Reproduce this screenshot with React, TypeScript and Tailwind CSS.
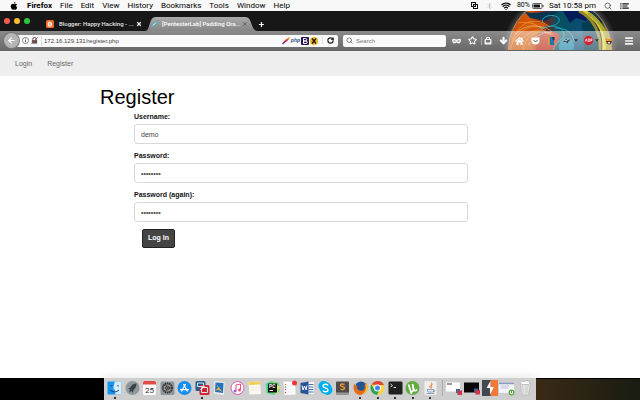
import React, { useState } from 'react';
import { Search, Wifi, Bluetooth, Star, ArrowLeft, ArrowDown, RotateCw, Menu, Plus, X } from 'lucide-react';

const menus = ['File', 'Edit', 'View', 'History', 'Bookmarks', 'Tools', 'Window', 'Help'];

const MenuBar: React.FC = () => (
  <header className="flex h-[11px] items-center justify-between bg-[#f8f8f8] pl-[10px] pr-[11px] font-[family-name:Roboto,sans-serif] text-[8px] leading-[11px] text-black">
    <nav className="flex items-center gap-2 whitespace-nowrap">
      <svg viewBox="0 0 16 18" className="mr-[1px] h-[8px] w-[8px]">
        <path d="M11 0c0 2-1.300 4-3.300 4C7.500 2 9 .3 11 0ZM8 5c1 0 2-1 3.600-1 1.300 0 2.400.6 3.200 1.700-2.800 1.700-2.300 5.600.5 6.700C14.500 15 13 17.500 11.500 17.500c-1.200 0-1.700-.7-3.300-.7s-2.200.7-3.300.7C3 17.500.7 13.500.7 9.800.7 6.200 3 4 5.200 4 6.400 4 7.300 5 8 5Z" />
      </svg>
      <button className="font-bold">Firefox</button>
      {menus.map((m) => (
        <button key={m}>{m}</button>
      ))}
    </nav>
    <div className="flex items-center whitespace-nowrap">
      <svg viewBox="0 0 14 14" className="mr-2 h-[7px] w-[7px]" fill="none" stroke="#111" strokeWidth="2">
        <rect x="1" y="1" width="8" height="8" />
        <rect x="5" y="5" width="8" height="8" />
      </svg>
      <Bluetooth className="mr-2 h-2 w-[7px] text-[#b4b4b4]" />
      <Wifi className="mr-[6px] h-[10px] w-[10px]" strokeWidth={3} />
      <span className="mr-[2px] text-[7px] leading-[11px]">80%</span>
      <svg viewBox="0 0 24 12" className="mr-[5px] h-[6px] w-[12px]">
        <rect x="1" y="1" width="19" height="10" rx="2" fill="none" stroke="#333" strokeWidth="1.500" />
        <rect x="3" y="3" width="13" height="6" fill="#111" />
        <path d="M22 4v4" stroke="#333" strokeWidth="2" />
      </svg>
      <span className="mr-2">Sat 10:58 pm</span>
      <Search className="mr-2 h-2 w-2 text-[#333]" />
      <svg viewBox="0 0 20 14" className="h-[6px] w-[9px]" stroke="#111" strokeWidth="2.500">
        <path d="M0 2h3M0 7h3M0 12h3M5 2h15M5 7h12M5 12h15" />
      </svg>
    </div>
  </header>
);

/* Glowing marble of the browser theme */
const ThemeArt: React.FC = () => (
  <svg viewBox="0 0 120 40" className="absolute right-[20px] top-0 h-[40px] w-[120px]">
    <defs>
      <radialGradient id="halo" cx="60" cy="39" r="58" gradientUnits="userSpaceOnUse">
        <stop offset=".86" stopColor="#fff" stopOpacity=".3" />
        <stop offset="1" stopColor="#888" stopOpacity="0" />
      </radialGradient>
      <linearGradient id="marble" x1="0" x2="1">
        <stop offset="0" stopColor="#b84b0c" />
        <stop offset=".25" stopColor="#d85808" />
        <stop offset=".38" stopColor="#702420" />
        <stop offset=".48" stopColor="#07505f" />
        <stop offset=".7" stopColor="#0a4d75" />
        <stop offset=".84" stopColor="#0b2b38" />
        <stop offset=".9" stopColor="#b59a18" />
        <stop offset="1" stopColor="#d8bd25" />
      </linearGradient>
      <clipPath id="ball"><circle cx="60" cy="39" r="51" /></clipPath>
    </defs>
    <circle cx="60" cy="39" r="58" fill="url(#halo)" />
    <g clipPath="url(#ball)" fill="none">
      <rect width="120" height="40" fill="url(#marble)" />
      <path d="M24 0c12 5 22-2 34 1L46 10 30 7Z" fill="#0c3550" />
      <path d="M63 0h28l-5 10-10-3-6 5Z" fill="#071a58" />
      <path d="M82 12l12-4 4 32H84Z" fill="#063c50" />
      <path d="M10 34C17 8 36 8 48 15c-8 2-13 8-16 25H10Z" fill="#cf5a0c" />
      <path d="M36 40c0-12 7-20 18-19 9 1 5 9-1 19Z" fill="#b8240c" />
      <path d="M60 40c-4-8 4-15 9-13s6 8 4 13Z" fill="#1884a8" />
      <path d="M83 0c17 8 23 22 21 40" stroke="#e8cf35" strokeWidth="4" />
      <path d="M79 0c16 8 22 24 21 40" stroke="#96862c" strokeWidth="3" />
      <path d="M88 2c15 10 21 24 19 38" stroke="#a6a52c" strokeWidth="3" />
      <path d="M43 12c-4-8 14-10 16-4 2 7-13 8-20 9M40 20c10-9 23-4 24 3s-9 5-11 17M55 17c12 0 18 5 19 14" stroke="#22a4b8" strokeWidth="1" />
      <path d="M12 31C19 8 38 6 50 16M10 38c8-24 30-28 42-17M19 33c10-17 24-16 34-9M23 40c3-20 19-22 28-16M18 12c12-2 20 1 28 10" stroke="#f98c2e" strokeWidth=".8" />
      <path d="M15 24c9-10 20-12 31-5M28 34c8-9 12-12 24-13" stroke="#ffd098" strokeWidth=".5" />
    </g>
    <circle cx="60" cy="39" r="51.500" fill="none" stroke="#f4b77c" strokeWidth=".6" />
  </svg>
);

const TabStrip: React.FC = () => (
  <div className="relative flex h-5 items-end pl-1 font-[family-name:Roboto,sans-serif] text-[6px] font-bold leading-[14px] text-white">
    <div className="flex h-full w-[40px] items-center gap-1">
      <button aria-label="Close window" className="h-[6px] w-[6px] rounded-full bg-[#fb5a52]" />
      <button aria-label="Minimize window" className="h-[6px] w-[6px] rounded-full bg-[#fdbc2f]" />
      <button aria-label="Zoom window" className="h-[6px] w-[6px] rounded-full bg-[#29c73f]" />
    </div>
    <div className="flex h-[14px] w-[101px] items-center pl-[2px] pr-[3px] text-[#e4e4e4]">
      <svg viewBox="0 0 16 16" className="mr-[5px] h-2 w-2 shrink-0">
        <rect width="16" height="16" rx="3" fill="#f36b20" />
        <path d="M5 3.500h3.500a2.500 2.500 0 0 1 2.500 2.500c0 1 .2 1.200 1 1.500v2.500a3 3 0 0 1-3 3H6a2.500 2.500 0 0 1-2.500-2.500V5.500Z" fill="#fff" />
        <path d="M6 6.300h2.500M6 9.800h4" stroke="#f36b20" strokeWidth="1.500" strokeLinecap="round" />
      </svg>
      <span className="flex-1 whitespace-nowrap font-medium">Blogger: Happy Hacking - ...</span>
      <button aria-label="Close tab"><X className="h-[6px] w-[6px]" strokeWidth={5} /></button>
    </div>
    <div className="relative h-[14px] w-[113px]">
      <svg viewBox="0 0 114 14" preserveAspectRatio="none" className="absolute inset-0 h-full w-full">
        <defs>
          <linearGradient id="tab" x2="0" y2="1">
            <stop stopColor="#aaa" />
            <stop offset="1" stopColor="#858585" />
          </linearGradient>
        </defs>
        <path d="M0 14C6 14 3 0 11 0h90c8 0 5 14 13 14Z" fill="url(#tab)" />
      </svg>
      <div className="relative flex h-full items-center pl-[6px] pr-[10px]">
        <svg viewBox="0 0 16 16" className="mr-[3px] h-2 w-2 shrink-0">
          <path d="M1 14 5 5l4-1 6-3-3 7-5 4Z" fill="#58a5bd" />
          <path d="m3 11 8-6" stroke="#d1e9ef" strokeWidth="2" />
        </svg>
        <span className="flex-1 whitespace-nowrap font-medium">[PentesterLab] Padding Ora...</span>
        <button aria-label="Close tab"><X className="h-[6px] w-[6px] text-[#555]" strokeWidth={3} /></button>
      </div>
    </div>
    <button aria-label="New tab" className="flex h-[14px] items-center"><Plus className="h-[7px] w-[7px]" strokeWidth={4} /></button>
  </div>
);

const Toolbar: React.FC = () => (
  <div className="relative flex h-5 items-center border-b border-[#666] bg-gradient-to-b from-white/50 to-white/35 pl-1 pr-[6px] text-[6px]">
    <button aria-label="Back" className="z-10 flex h-[15px] w-[15px] items-center justify-center rounded-full bg-[#b5b5b5] ring-1 ring-[#777]">
      <ArrowLeft className="h-[9px] w-[9px] text-white" strokeWidth={3} />
    </button>
    <div className="-ml-[2px] mr-[5px] flex h-3 flex-1 items-center rounded-r-[2px] bg-[#fafafa] pl-[5px] pr-1">
      <svg viewBox="0 0 16 16" className="mr-[2px] h-[7px] w-[7px]" fill="none" stroke="#555" strokeWidth="1.500">
        <circle cx="8" cy="8" r="7" />
        <path d="M8 7v5M8 3.500v2" strokeWidth="2" />
      </svg>
      <svg viewBox="0 0 16 16" className="mr-[3px] h-[7px] w-[7px]">
        <path d="M4 7V5a4 4 0 0 1 8 0v2" fill="none" stroke="#444" strokeWidth="2" />
        <rect x="2" y="7" width="12" height="8" fill="#555" />
        <path d="M1 15 15 1" stroke="#d33" strokeWidth="2" />
      </svg>
      <input aria-label="Address" defaultValue="172.16.129.131/register.php" className="h-[10px] min-w-0 flex-1 border-l border-[#ddd] pl-[2px] text-[#444] outline-none" />
      <div className="flex items-center gap-[1px]">
        <svg viewBox="0 0 16 16" className="h-2 w-2">
          <path d="M1 14C4 7 9 3 15 1c-1 5-5 9-12 11Z" fill="#d63b3b" />
          <path d="m1 14 6-6" stroke="#70318b" strokeWidth="3" />
          <path d="m11 5 4-4" stroke="#f39a32" strokeWidth="3" />
        </svg>
        <span className="text-[5px] font-bold italic text-[#254f8a]">php</span>
        <svg viewBox="0 0 16 16" className="h-2 w-2">
          <rect width="16" height="16" rx="2" fill="#26164f" />
          <path d="M5 3h4a2.300 2.300 0 0 1 0 5H5Zm0 5h5a2.500 2.500 0 0 1 0 5H5Z" fill="none" stroke="#fff" strokeWidth="2" />
        </svg>
        <svg viewBox="0 0 16 16" className="h-2 w-2">
          <circle cx="8" cy="8" r="8" fill="#f3b61c" />
          <path d="m4 3 8 10M12 3 4 13" stroke="#111" strokeWidth="2.500" />
        </svg>
      </div>
      <button aria-label="Reload" className="ml-1 border-l border-[#ddd] pl-1"><RotateCw className="h-[7px] w-[7px] text-[#222]" strokeWidth={4} /></button>
    </div>
    <label className="flex h-3 w-[103px] items-center gap-[3px] rounded-[2px] bg-[#fafafa] pl-[3px]">
      <Search className="h-[7px] w-[7px] text-[#777]" strokeWidth={3} />
      <input aria-label="Search" placeholder="Search" className="h-[10px] w-[80px] outline-none placeholder:text-[#777]" />
    </label>
    <div className="flex h-full w-[188px] items-center text-[#f4f4f4]">
      <button aria-label="Private browsing" className="ml-[6px] mr-[7px]">
        <svg viewBox="0 0 18 10" className="h-[6px] w-[9px]">
          <path d="M0 2c3-3 6 0 9 0s6-3 9 0c0 5-2 8-5 8-2 0-3-2-4-2s-2 2-4 2C2 10 0 7 0 2Z" fill="currentColor" />
          <path d="M3 5h4m4 0h4" stroke="#777" strokeWidth="2" />
        </svg>
      </button>
      <button aria-label="Bookmark" className="mr-[4px]"><Star className="h-[9px] w-[9px]" strokeWidth={3} /></button>
      <button aria-label="Library" className="mr-[7px] border-l border-[#aaa] pl-[2px]">
        <svg viewBox="0 0 16 16" className="h-2 w-2">
          <path d="M5 4V1h6v3" fill="none" stroke="currentColor" strokeWidth="2" />
          <rect x="1" y="4" width="14" height="11" rx="2" fill="currentColor" />
          <path d="M4 7h8v2H4Zm0 4h8" stroke="#777" />
        </svg>
      </button>
      <button aria-label="Downloads" className="mr-[7px]"><ArrowDown className="h-[9px] w-[9px]" strokeWidth={6} /></button>
      <button aria-label="Home" className="mr-[7px]">
        <svg viewBox="0 0 18 16" className="h-2 w-[9px]">
          <path d="M9 0 0 8l1.500 1.500L9 3l7.500 6.500L18 8l-3-3V1h-3v2Z" fill="#fff" />
          <path d="m9 4 6 5.500V16h-4v-5H7v5H3V9.500Z" fill="#fff" />
        </svg>
      </button>
      <button aria-label="Pocket" className="mr-2">
        <svg viewBox="0 0 18 16" className="h-2 w-[9px]">
          <path d="M1 1h16v6a8 8 0 0 1-16 0Z" fill="#fff" />
          <path d="m5 6 4 4 4-4" fill="none" stroke="#555" strokeWidth="2" />
        </svg>
      </button>
      <button aria-label="Notebook" className="mr-[7px]">
        <svg viewBox="0 0 14 16" className="h-2 w-[7px]">
          <path d="M2 0h10v16H2Z" fill="#2674a8" />
          <path d="M2 0v16" stroke="#e5a13b" strokeWidth="3" />
          <path d="M9 0v7l2-2 2 2V0" fill="#22344a" />
        </svg>
      </button>
      <button aria-label="Add-on" className="mr-[3px]">
        <svg viewBox="0 0 18 16" className="h-2 w-[9px]">
          <path d="m1 10 5-3 2-4 3 3 6-1-4 4-2 4-3-3Z" fill="#3f4852" />
          <path d="m6 8 5-2" stroke="#ddd" strokeWidth="2" />
        </svg>
      </button>
      <svg viewBox="0 0 6 4" className="mr-[6px] h-[3px] w-[4px]"><path d="M0 0h6L3 4Z" fill="#333" /></svg>
      <button aria-label="Adblock Plus" className="mr-[2px]">
        <svg viewBox="0 0 16 16" className="h-[9px] w-[9px]">
          <path d="M5 0h6l5 5v6l-5 5H5l-5-5V5Z" fill="#d3202c" />
          <path d="m2 10 2-5 1.500 5M7.500 5v5h2V5Zm4.500 5V5h2v3h-2" fill="none" stroke="#fff" strokeWidth="1.200" />
        </svg>
      </button>
      <svg viewBox="0 0 6 4" className="mr-[6px] h-[3px] w-[4px]"><path d="M0 0h6L3 4Z" fill="#333" /></svg>
      <button aria-label="Cookies" className="mr-auto">
        <svg viewBox="0 0 16 16" className="h-2 w-2">
          <path d="M1 2 5 4h6l4-2-1 9-6 4-6-4Z" fill="#e79a30" />
          <path d="M2 8h12l-2 5-4 2-4-2Z" fill="#4a3021" />
          <path d="M5 10h6l-3 4Z" fill="#fff" />
        </svg>
      </button>
      <button aria-label="Open menu"><Menu className="h-[10px] w-[10px]" strokeWidth={4} /></button>
    </div>
  </div>
);

const fields = [
  { id: 'username', label: 'Username:', type: 'text', value: 'demo' },
  { id: 'password', label: 'Password:', type: 'password', value: 'demodemo' },
  { id: 'password_again', label: 'Password (again):', type: 'password', value: 'demodemo' },
];

const RegisterForm: React.FC = () => {
  const [values, setValues] = useState(fields.map((f) => f.value));

  return (
    <main className="flex-1 bg-white pt-[10px]">
      <div className="mx-auto max-w-[440px]">
        <h1 className="text-[20px] font-medium leading-[22px] text-black">Register</h1>
        <form className="ml-[34px] mr-[72px] mt-1 text-[7px]" onSubmit={(e) => e.preventDefault()}>
          {fields.map((f, i) => (
            <div key={f.id} className="mb-[7px]">
              <label htmlFor={f.id} className="mb-[2px] block font-bold leading-[10px] text-[#111]">{f.label}</label>
              <input
                id={f.id}
                type={f.type}
                value={values[i]}
                onChange={(e) => setValues(values.map((v, j) => (j === i ? e.target.value : v)))}
                className="block h-5 w-full rounded-[3px] border border-[#d8d8d8] bg-white px-[6px] text-[#444] outline-none"
              />
            </div>
          ))}
          <button type="submit" className="ml-2 h-[19px] rounded-[2px] border border-[#222] bg-[#444] px-[5px] font-bold text-white">Log In</button>
        </form>
      </div>
    </main>
  );
};

const dockApps = [
  { name: 'Finder', open: true, art: <><rect x="1" y="2" width="28" height="26" rx="2" fill="#1595ef" /><path d="M16 2h13v26H17c-1-4-1-7-1-10h-3c0-6 1-11 3-16Z" fill="#d9edf8" /><path d="M8 9v3m14-3v3M6 19c5 5 13 5 18 0" fill="none" stroke="#164368" strokeWidth="2" /></> },
  { name: 'Launchpad', open: false, art: <><circle cx="15" cy="15" r="14" fill="#8e989d" /><path d="M23 6c-7 0-11 4-13 9l-4 1 4 2-2 6 5-3 2 4 2-6c4-3 6-7 6-13Z" fill="#394449" /></> },
  { name: 'Calendar', open: false, art: <><rect x="2" y="1" width="26" height="28" rx="3" fill="#fafafa" /><path d="M2 8V3l3-2h20l3 2v5Z" fill="#e34a45" /><text x="15" y="24" textAnchor="middle" fontSize="16" fontFamily="Roboto, sans-serif" fill="#333">25</text></> },
  { name: 'System Preferences', open: false, art: <><rect x="1" y="2" width="28" height="27" rx="3" fill="#8c979c" /><circle cx="15" cy="15" r="9" fill="#aaa" stroke="#333" strokeWidth="4" strokeDasharray="3 1" /><circle cx="15" cy="15" r="4" fill="none" stroke="#333" strokeWidth="2" /><path d="M15 15h8m-8 0-4-7m4 7-4 7" stroke="#333" strokeWidth="2" /></> },
  { name: 'App Store', open: false, art: <><circle cx="15" cy="15" r="14" fill="#178df0" /><path d="m9 22 8-15m4 15L13 7M6 18h18" stroke="#fff" strokeWidth="2.500" /></> },
  { name: 'VMware Fusion', open: true, art: <><rect x="1" y="1" width="20" height="20" rx="3" fill="#285c91" /><rect x="9" y="9" width="20" height="20" rx="3" fill="#cf2834" /><path d="M5 5h12v7H5Zm8 9h12v10H13Z" fill="none" stroke="#d6e6ef" strokeWidth="2" /><path d="m11 19 8-8" stroke="#fff" strokeWidth="2" /></> },
  { name: 'Mail', open: false, art: <><path d="m5 1 20 2-1 26-20-3Z" fill="#eee" /><path d="m7 4 16 1-1 20-16-2Z" fill="#2374bc" /><path d="m9 8 6 7 6 8-8-4-7 1 6-5Z" fill="#dfad54" /></> },
  { name: 'iTunes', open: false, art: <><circle cx="15" cy="15" r="13" fill="#fff" stroke="#d95dae" strokeWidth="2" /><path d="M12 21V9l9-2v12" fill="none" stroke="#ed4c78" strokeWidth="2" /><circle cx="10" cy="21" r="3" fill="#9a60dc" /><circle cx="19" cy="19" r="3" fill="#f04b72" /></> },
  { name: 'Notes', open: false, art: <><path d="m3 3 23-1 2 25-23 1Z" fill="#fbfaf0" /><path d="m3 3 23-1 .5 6-23 1Z" fill="#f4cf55" /><path d="M6 14h20M6 19h20" stroke="#ddd" /></> },
  { name: 'PyCharm', open: false, art: <><path d="m1 7 11-6 16 4 1 17-12 7L3 25Z" fill="#5ad48c" /><path d="m17 3 12 10-5 14-9-5Z" fill="#e9e950" /><rect x="6" y="6" width="18" height="18" fill="#111" /><text x="8" y="15" fontSize="10" fontFamily="Roboto, sans-serif" fontWeight="bold" fill="#fff">PC</text><path d="M9 20h7" stroke="#fff" strokeWidth="2" /></> },
  { name: 'Reminders', open: false, art: <><path d="m3 2 23 1 1 25-22 1Z" fill="#fff" /><path d="M11 11h12M11 17h12M11 23h12" stroke="#ccc" /><circle cx="7" cy="8" r="1.500" fill="#ed6a42" /><circle cx="7" cy="13" r="1.500" fill="#35a36a" /><circle cx="7" cy="18" r="1.500" fill="#a248ba" /><circle cx="7" cy="24" r="1.500" fill="#a65a40" /><circle cx="25" cy="5" r="5" fill="#f1363b" /></> },
  { name: 'Word', open: false, art: <><rect x="10" y="3" width="18" height="24" fill="#f6f8fa" /><path d="M17 8h10M17 13h10M17 18h10M17 23h10" stroke="#4673ac" strokeWidth="2" /><path d="m1 5 16-3v26L1 25Z" fill="#285596" /><path d="m4 10 2 9 3-8 3 8 2-9" fill="none" stroke="#fff" strokeWidth="2" /></> },
  { name: 'Skype', open: false, art: <><circle cx="11" cy="11" r="10" fill="#00aff0" /><circle cx="19" cy="19" r="10" fill="#00aff0" /><circle cx="15" cy="15" r="12" fill="#00aff0" /><path d="M20 10c-2-4-10-3-10 1 0 5 10 3 10 8 0 4-8 5-10 1" fill="none" stroke="#fff" strokeWidth="3" /></> },
  { name: 'Sublime Text', open: false, art: <><rect x="2" y="2" width="26" height="26" rx="2" fill="#4b4b4b" /><path d="M2 24h26v4H2Z" fill="#999" /><path d="M19 8c-4-2-8-1-8 2 1 3 8 2 8 5 0 4-5 4-8 2" fill="none" stroke="#f29136" strokeWidth="3" /></> },
  { name: 'Firefox', open: true, art: <><circle cx="16" cy="14" r="12" fill="#235594" /><path d="M2 7c1 2 4 2 6 3-1 5 1 9 6 10 7 2 11-3 9-9l3-7c6 9 3 21-7 24C7 32-2 21 2 7Z" fill="#e66b18" /><path d="M23 5c6 8 3 18-5 22 6 0 11-5 11-12 0-5-2-8-6-10Z" fill="#ffc52b" /></> },
  { name: 'Chrome', open: true, art: <><circle cx="15" cy="15" r="14" fill="#ffd441" /><path d="M3 8A14 14 0 0 1 28 9H15Z" fill="#df4637" /><path d="M3 8a14 14 0 0 0 11 21l6-11-11 1Z" fill="#25a45a" /><circle cx="15" cy="15" r="7" fill="#fff" /><circle cx="15" cy="15" r="5" fill="#4086ee" /></> },
  { name: 'Terminal', open: true, art: <><rect x="1" y="2" width="28" height="26" rx="3" fill="#202020" stroke="#777" /><path d="m5 7 4 3-4 3m6 1h5" fill="none" stroke="#ddd" strokeWidth="2" /></> },
  { name: 'uTorrent', open: true, art: <><circle cx="15" cy="15" r="14" fill="#62ac3f" /><path d="m7 8 4 12c1 4 7 2 6-3L15 7m1 8c2 6 5 7 8 3M11 20l2 7" fill="none" stroke="#fff" strokeWidth="3.500" /></> },
  { name: 'Java', open: true, art: <><rect x="3" y="1" width="24" height="28" rx="2" fill="#eee" /><path d="M17 4c3 5-7 6-2 11m4-7c-5 3 0 5-3 8" fill="none" stroke="#e47933" strokeWidth="2" /><path d="M8 18h13v5H10Zm13 1c4 0 3 4 0 3M7 26h16" fill="none" stroke="#668ba9" strokeWidth="1.500" /></> },
];

const dockWindows = [
  { name: 'VMware window', art: <><rect y="5" width="28" height="18" fill="#fff" /><path d="M2 8h10" stroke="#333" strokeWidth="2" /><rect x="20" y="18" width="8" height="8" fill="#35649c" /><rect x="23" y="21" width="9" height="9" fill="#cf3645" /></> },
  { name: 'Console window', art: <><rect y="5" width="30" height="20" fill="#080808" /><rect x="20" y="17" width="8" height="8" fill="#35649c" /><rect x="23" y="20" width="9" height="9" fill="#cf3645" /></> },
  { name: 'Burp Suite', art: <><rect width="32" height="32" fill="#424a50" /><path d="M17 0h15v32H17v-8l7-10h-7Z" fill="#f27838" /><path d="m17 2-8 14h7v13l8-15h-7Z" fill="#fff" /></> },
  { name: 'Torrent window', art: <><rect y="6" width="30" height="20" fill="#f5f5f8" /><path d="M0 7h30" stroke="#859bc7" strokeWidth="3" /><path d="M3 12h18M3 16h15" stroke="#bbc4d8" strokeWidth="2" /><circle cx="25" cy="25" r="6" fill="#5cae42" /><path d="M23 22v5h4v-5" fill="none" stroke="#fff" strokeWidth="2" /></> },
  { name: 'Trash', art: <><path d="M6 5h21l-4 25H10Z" fill="#e4e4e4" stroke="#aaa" /><path d="m11 10 2 17m5-17v17m4-17-2 17" stroke="#bbb" /><path d="M7 5c3-6 7 1 10-3 5-3 6 2 9 3l-3 4H9Z" fill="#fff" stroke="#999" /></> },
];

const Dock: React.FC = () => (
  <footer className="relative flex h-[22px] justify-center bg-black">
    <div className="flex-1 bg-black" />
    <div className="flex w-[432px] justify-between bg-[#cecece] px-[3px] pt-[2px] shadow-[0_0_12px_rgba(0,0,0,0.12)]">
      <div className="flex w-[331px] justify-between">
        {dockApps.map((app) => (
          <button key={app.name} aria-label={app.name} className="flex flex-col items-center">
            <svg viewBox="0 0 30 30" className="h-4 w-[15px]">{app.art}</svg>
            {app.open && <span className="mt-[1px] h-[2px] w-[2px] rounded-full bg-black" />}
          </button>
        ))}
      </div>
      <div className="h-4 w-px bg-[#aaa]" />
      <div className="flex w-[87px] justify-between">
        {dockWindows.map((w) => (
          <button key={w.name} aria-label={w.name} className="flex flex-col items-center">
            <svg viewBox="0 0 32 32" className="h-4 w-4">{w.art}</svg>
          </button>
        ))}
      </div>
    </div>
    <div className="flex-1 border-t border-black bg-gradient-to-r from-[#3a2a15] to-[#191c12]" />
  </footer>
);

export default function App() {
  return (
    <div className="flex min-h-screen flex-col bg-white font-['Liberation_Sans',Arial,sans-serif]">
      <MenuBar />
      <div className="relative bg-[#171717]">
        <ThemeArt />
        <TabStrip />
        <Toolbar />
      </div>
      <nav className="flex h-[25px] items-center gap-[15px] bg-[#eee] pl-[15px] pt-[2px] text-[7px] text-[#666]">
        <a href="#login">Login</a>
        <a href="#register">Register</a>
      </nav>
      <RegisterForm />
      <Dock />
    </div>
  );
}
